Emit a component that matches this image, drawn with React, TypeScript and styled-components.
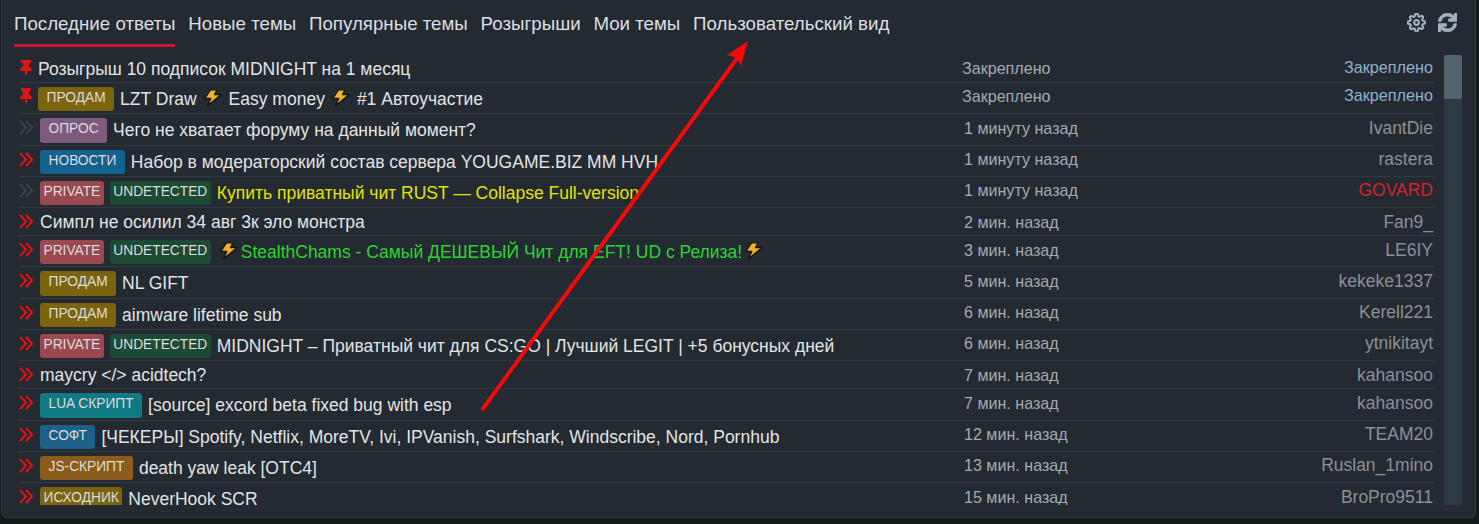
import { Fragment } from "react";
import styled, { createGlobalStyle } from "styled-components";
import { FaSync, FaThumbtack } from "react-icons/fa";
import { FiSettings } from "react-icons/fi";

const GlobalStyle = createGlobalStyle`
  html, body {
    margin: 0;
    height: 100%;
    background: #131a1b;
    overflow: hidden;
  }
  * { box-sizing: border-box; }
`;

const Page = styled.div`
  position: relative;
  width: 1479px;
  height: 524px;
  font-family: "Liberation Sans", Arial, sans-serif;
`;

const Panel = styled.section`
  width: 1475px;
  height: 518px;
  margin-left: 1px;
  background: #232a32;
  border: 1px solid #333a41;
  border-top: 0;
  border-radius: 0 0 6px 6px;
`;

const Header = styled.header`
  display: flex;
  justify-content: space-between;
  height: 47px;
  padding: 0 18px 0 12px;
`;

const Tabs = styled.nav`
  display: flex;
  gap: 12.8px;
`;

const Tab = styled.a<{ $active?: boolean }>`
  height: 47px;
  padding-top: 14px;
  font-size: 18.72px;
  line-height: 20px;
  color: #dcdfe2;
  border-bottom: 3px solid ${(p) => (p.$active ? "#c5173a" : "transparent")};
`;

const Tools = styled.div`
  display: flex;
  gap: 12px;
  padding-top: 13px;
  color: #9fb2bd;
  font-size: 19px;
  svg { display: block; }
`;

const Body = styled.div`
  display: flex;
  gap: 10px;
  height: 450px;
  margin-top: 8px;
  padding-left: 16px;
`;

const List = styled.div`
  width: 1416px;
  overflow: hidden;
`;

const Row = styled.div<{ $height: number }>`
  display: flex;
  align-items: flex-start;
  height: ${(p) => p.$height}px;
  padding-top: 4px;
  border-bottom: 1px solid #31383f;
  &:last-child { border-bottom: 0; }
`;

const Marker = styled.span<{ $pinned?: boolean; $read?: boolean }>`
  flex: none;
  width: ${(p) => (p.$pinned ? 20 : 22)}px;
  height: 20px;
  padding: ${(p) => (p.$pinned ? "1px 0 0 0" : "2px 0 0 1px")};
  font-size: 16px;
  color: ${(p) => (p.$read ? "#3a4248" : "#e01414")};
  svg { display: block; }
`;

const Subject = styled.div`
  flex: 1;
  display: flex;
  align-items: flex-start;
  min-width: 0;
`;

const Tag = styled.span<{ $bg: string; $tight?: boolean }>`
  flex: none;
  height: 24.3px;
  margin-right: 6px;
  padding: 2px ${(p) => (p.$tight ? 3.5 : 8.5)}px 0;
  font-size: 13.75px;
  line-height: 17px;
  color: #dcdcdc;
  background: ${(p) => p.$bg};
  border-radius: 3px;
`;

const Title = styled.span<{ $color?: string; $bare?: boolean }>`
  display: inline-flex;
  align-items: center;
  height: 22px;
  margin-top: ${(p) => (p.$bare ? -1 : 1)}px;
  font-size: 17.5px;
  line-height: 20px;
  white-space: nowrap;
  color: ${(p) => p.$color ?? "#e2e4e6"};
`;

const Bolt = styled.svg<{ $tight?: boolean }>`
  flex: none;
  width: 18px;
  height: 18px;
  margin: -3px ${(p) => (p.$tight ? 3 : 7)}px 0;
`;

const Time = styled.span<{ $pinned?: boolean }>`
  flex: none;
  width: ${(p) => (p.$pinned ? 472 : 470)}px;
  margin-top: 0.4px;
  font-size: 16.1px;
  line-height: 18px;
  color: #a4aaae;
`;

const Author = styled.span<{ $color: string; $pinned?: boolean }>`
  flex: none;
  width: 130px;
  margin-left: -130px;
  padding-right: 1px;
  margin-top: ${(p) => (p.$pinned ? -1 : 0.4)}px;
  font-size: ${(p) => (p.$pinned ? 16.2 : 17.5)}px;
  line-height: 18px;
  text-align: right;
  color: ${(p) => p.$color};
`;

const Scrollbar = styled.div`
  width: 18px;
  height: 450px;
  background: #2e3a42;
  border-radius: 2px;
`;

const Thumb = styled.div`
  height: 44px;
  background: #52646e;
  border-radius: 2px;
`;

const Arrow = styled.svg`
  position: absolute;
  inset: 0;
  pointer-events: none;
`;

type TagKind = { label: string; bg: string; tight?: boolean };

const SELL: TagKind = { label: "ПРОДАМ", bg: "#7b640e" };
const PRIVATE: TagKind = { label: "PRIVATE", bg: "#9a4a4e", tight: true };
const UD: TagKind = { label: "UNDETECTED", bg: "#1c4a34", tight: true };

type Topic = {
  parts: string[];
  tags?: TagKind[];
  color?: string;
  time: string;
  author: string;
  authorColor?: string;
  pinned?: boolean;
  read?: boolean;
  tightBolts?: boolean;
  height: number;
};

const BLUE = "#8db2cc";

// "*" in parts stands for the lightning emoji
const topics: Topic[] = [
  { parts: ["Розыгрыш 10 подписок MIDNIGHT на 1 месяц"], time: "Закреплено", author: "Закреплено", authorColor: BLUE, pinned: true, height: 28 },
  { parts: ["LZT Draw", "*", "Easy money", "*", "#1 Автоучастие"], tags: [SELL], time: "Закреплено", author: "Закреплено", authorColor: BLUE, pinned: true, height: 31.3 },
  { parts: ["Чего не хватает форуму на данный момент?"], tags: [{ label: "ОПРОС", bg: "#7e5a7c" }], time: "1 минуту назад", author: "IvantDie", read: true, height: 31.3 },
  { parts: ["Набор в модераторский состав сервера YOUGAME.BIZ MM HVH"], tags: [{ label: "НОВОСТИ", bg: "#14628f" }], time: "1 минуту назад", author: "rastera", height: 31.3 },
  { parts: ["Купить приватный чит RUST — Collapse Full-version"], tags: [PRIVATE, UD], color: "#e3e300", time: "1 минуту назад", author: "GOVARD", authorColor: "#d2232f", read: true, height: 31.3 },
  { parts: ["Симпл не осилил 34 авг 3к эло монстра"], time: "2 мин. назад", author: "Fan9_", height: 28 },
  { parts: ["*", "StealthChams - Самый ДЕШЕВЫЙ Чит для EFT! UD с Релиза!", "*"], tags: [PRIVATE, UD], color: "#2fd32f", tightBolts: true, time: "3 мин. назад", author: "LE6IY", height: 31.3 },
  { parts: ["NL GIFT"], tags: [SELL], time: "5 мин. назад", author: "kekeke1337", height: 31.3 },
  { parts: ["aimware lifetime sub"], tags: [SELL], time: "6 мин. назад", author: "Kerell221", height: 31.3 },
  { parts: ["MIDNIGHT – Приватный чит для CS:GO | Лучший LEGIT | +5 бонусных дней"], tags: [PRIVATE, UD], time: "6 мин. назад", author: "ytnikitayt", height: 31.3 },
  { parts: ["maycry </> acidtech?"], time: "7 мин. назад", author: "kahansoo", height: 28 },
  { parts: ["[source] excord beta fixed bug with esp"], tags: [{ label: "LUA СКРИПТ", bg: "#0f7a83" }], time: "7 мин. назад", author: "kahansoo", height: 31.3 },
  { parts: ["[ЧЕКЕРЫ] Spotify, Netflix, MoreTV, Ivi, IPVanish, Surfshark, Windscribe, Nord, Pornhub"], tags: [{ label: "СОФТ", bg: "#1b6188" }], time: "12 мин. назад", author: "TEAM20", height: 31.3 },
  { parts: ["death yaw leak [OTC4]"], tags: [{ label: "JS-СКРИПТ", bg: "#8c5c1a" }], time: "13 мин. назад", author: "Ruslan_1mino", height: 31.3 },
  { parts: ["NeverHook SCR"], tags: [{ label: "ИСХОДНИК", bg: "#7b640e", tight: true }], time: "15 мин. назад", author: "BroPro9511", height: 31.3 },
];

const tabs = ["Последние ответы", "Новые темы", "Популярные темы", "Розыгрыши", "Мои темы", "Пользовательский вид"];

function LightningIcon({ tight }: { tight?: boolean }) {
  return (
    <Bolt viewBox="0 0 18 18" $tight={tight}>
      <path
        d="M6.5.8H13l-2.5 4.7h6.7L3.5 16.8l3.3-7.3h-6z"
        fill="#efb02e"
        stroke="#15130c"
        strokeWidth="1.3"
        strokeLinejoin="round"
      />
    </Bolt>
  );
}

function ChevronsIcon() {
  return (
    <svg width="14" height="15" viewBox="0 0 14 15" fill="none" stroke="currentColor" strokeWidth="2">
      <path d="M1 1l6 6.5L1 14M7 1l6 6.5L7 14" />
    </svg>
  );
}

export default function App() {
  return (
    <Page>
      <GlobalStyle />
      <Panel>
        <Header>
          <Tabs>
            {tabs.map((tab, i) => (
              <Tab key={tab} $active={i === 0}>{tab}</Tab>
            ))}
          </Tabs>
          <Tools>
            <FiSettings strokeWidth={2.6} />
            <FaSync stroke="currentColor" strokeWidth={24} />
          </Tools>
        </Header>
        <Body>
          <List>
            {topics.map((t, i) => (
              <Row key={i} $height={t.height}>
                <Marker $pinned={t.pinned} $read={t.read}>
                  {t.pinned ? <FaThumbtack /> : <ChevronsIcon />}
                </Marker>
                <Subject>
                  {t.tags?.map((tag) => (
                    <Tag key={tag.label} $bg={tag.bg} $tight={tag.tight}>{tag.label}</Tag>
                  ))}
                  <Title $color={t.color} $bare={!t.tags}>
                    {t.parts.map((part, k) => (
                      <Fragment key={k}>{part === "*" ? <LightningIcon tight={t.tightBolts} /> : part}</Fragment>
                    ))}
                  </Title>
                </Subject>
                <Time $pinned={t.pinned}>{t.time}</Time>
                <Author $color={t.authorColor ?? "#8c9094"} $pinned={t.pinned}>{t.author}</Author>
              </Row>
            ))}
          </List>
          <Scrollbar>
            <Thumb />
          </Scrollbar>
        </Body>
      </Panel>
      <Arrow width="1479" height="524" viewBox="0 0 1479 524">
        <line x1="482" y1="410" x2="738" y2="57" stroke="#f50a0a" strokeWidth="4" />
        <polygon points="748,41 727,55 737,58 741,66" fill="#f50a0a" />
      </Arrow>
    </Page>
  );
}
